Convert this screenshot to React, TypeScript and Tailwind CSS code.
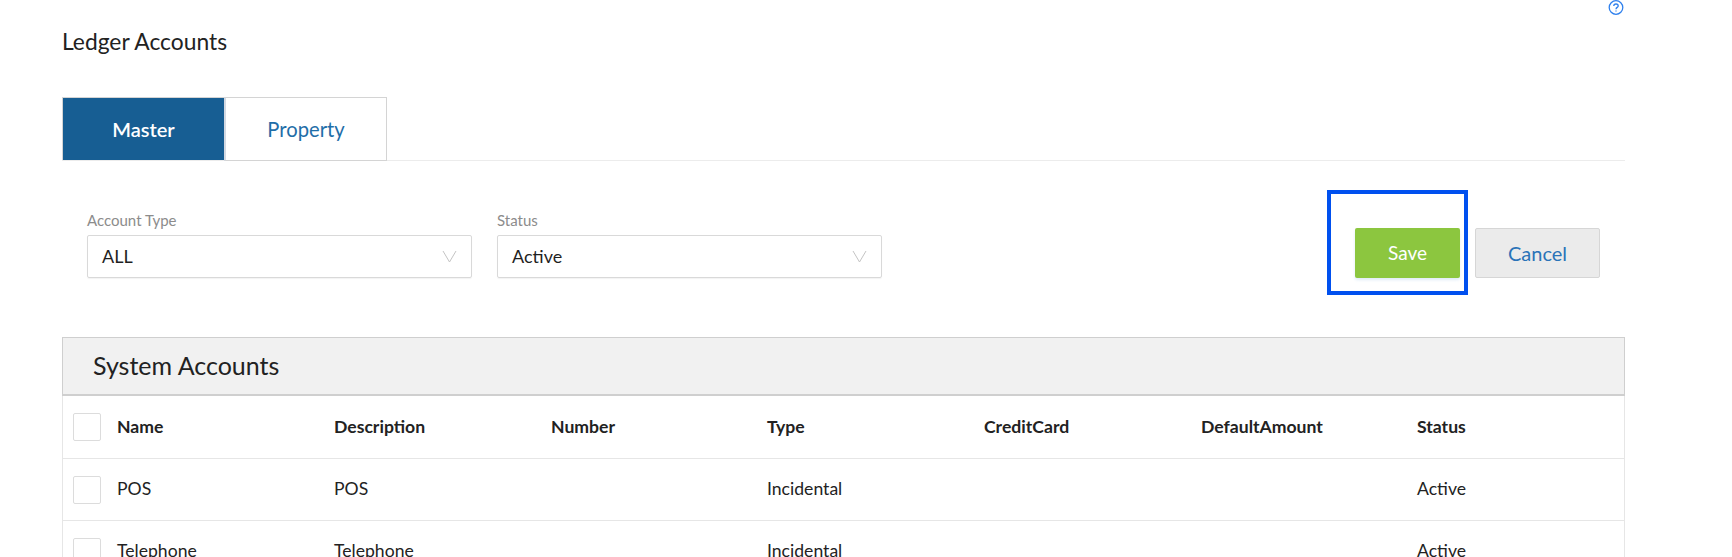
const COLS = ["Name", "Description", "Number", "Type", "CreditCard", "DefaultAmount", "Status"];
const ROWS = [
  ["POS", "POS", "", "Incidental", "", "", "Active"],
  ["Telephone", "Telephone", "", "Incidental", "", "", "Active"],
];

function Chevron() {
  return (
    <svg width="15" height="13" viewBox="0 0 15 13" fill="none" stroke="#c4c4c4" strokeWidth="1">
      <path d="M1 1 L7.5 12 L14 1" />
    </svg>
  );
}

function Select({ label, value }: { label: string; value: string }) {
  return (
    <div className="w-[385px] flex flex-col">
      <label className="text-[15px] leading-[14px] h-[22px] text-[#8c8c8c]">{label}</label>
      <div className="h-[43px] border border-[#d9d9d9] rounded-[2px] flex items-center justify-between pl-[14px] pr-[14px] shadow-[0_1px_1px_rgba(0,0,0,0.05)]">
        <span className="text-[18px] text-[#1f1f1f]">{value}</span>
        <Chevron />
      </div>
    </div>
  );
}

function Check() {
  return <div className="w-[28px] h-[28px] shrink-0 border border-[#dcdcdc] rounded-[2px] bg-white" />;
}

function Row({ cells, head, h }: { cells: string[]; head?: boolean; h: string }) {
  return (
    <div className={`flex items-center border-b border-[#e6e6e6] pl-[10px] ${h}`}>
      <Check />
      <div className="flex-1 grid grid-cols-[217px_217px_216px_217px_217px_216px_1fr] pl-[16px]">
        {cells.map((c, i) => (
          <div key={i} className={`text-[17.6px] text-[#222222] ${head ? "font-bold" : ""}`}>
            {c}
          </div>
        ))}
      </div>
    </div>
  );
}

export default function App() {
  return (
    <div className="relative h-[557px] overflow-hidden bg-white font-['Lato','Carlito','Open_Sans',sans-serif]">
      <div className="w-[1625px] pl-[62px]">
        <div className="h-[97px] relative">
          <h1 className="pt-[26px] text-[22.8px] leading-[30px] text-[#222222] font-normal">Ledger Accounts</h1>
          <svg className="absolute right-[1px] top-0" width="16" height="16" viewBox="0 0 16 16" fill="none" stroke="#2f80ed" strokeWidth="1.3">
            <circle cx="8" cy="7.5" r="6.8" />
            <path d="M5.8 6 C5.8 4.6 6.8 4 8 4 C9.3 4 10.2 4.8 10.2 5.9 C10.2 7.4 8 7.4 8 9.2" />
            <path d="M8 10.4 V11.6" />
          </svg>
        </div>
        <div className="flex h-[64px] border-b border-[#ececec]">
          <div className="w-[162px] h-[63px] bg-[#175e93] border-l border-t border-[#d4d4d4] flex items-center justify-center text-[20px] font-semibold text-white">
            Master
          </div>
          <div className="w-[163px] h-[64px] bg-white border border-l-2 border-[#d4d4d4] border-l-[#d3d9e2] flex items-center justify-center text-[20.2px] text-[#1f6ea8]">
            Property
          </div>
        </div>
        <div className="flex items-end justify-between h-[117px] pl-[25px] pr-[25px]">
          <div className="flex gap-[25px]">
            <Select label="Account Type" value="ALL" />
            <Select label="Status" value="Active" />
          </div>
          <div className="flex gap-[15px]">
            <button className="w-[105px] h-[50px] rounded-[2px] bg-[#8cc63f] text-white text-[19px] shadow-[0_2px_3px_rgba(100,160,220,0.2)]">Save</button>
            <button className="w-[125px] h-[50px] rounded-[2px] bg-[#ebebeb] border border-[#d6d6d6] text-[#2a73b8] text-[20px]">Cancel</button>
          </div>
        </div>
        <div className="mt-[59px] border-x border-[#e6e6e6]">
          <div className="h-[59px] -mx-[1px] bg-[#f1f1f1] border border-[#cfcfcf] border-b-2 flex items-center pl-[30px] text-[25px] text-[#222222]">
            System Accounts
          </div>
          <Row cells={COLS} head h="h-[63px]" />
          <Row cells={ROWS[0]} h="h-[62px]" />
          <Row cells={ROWS[1]} h="h-[62px]" />
        </div>
      </div>
      <div className="absolute left-[1327px] top-[190px] w-[141px] h-[105px] border-[4px] border-[#0050ef]" />
    </div>
  );
}
